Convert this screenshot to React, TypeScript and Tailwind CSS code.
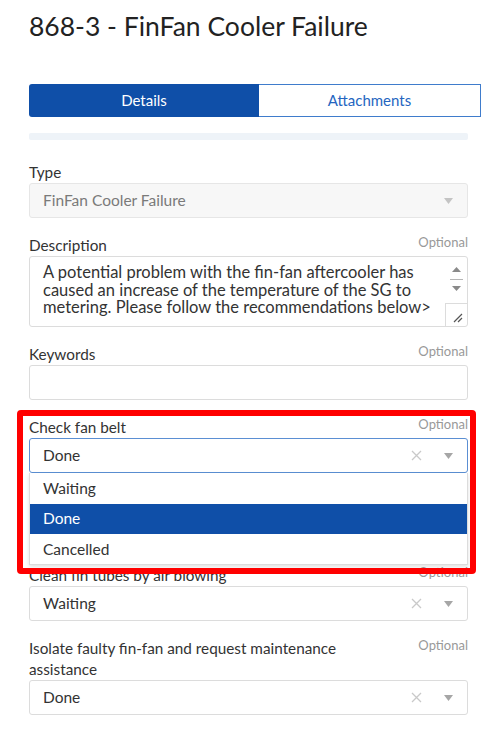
import { ReactNode } from "react";

const Label = ({ text, optional }: { text: ReactNode; optional?: boolean }) => (
  <div className="flex justify-between items-start min-h-[21px]">
    <span className="text-[15.3px] leading-[21px] text-[#333]">{text}</span>
    {optional && (
      <span className="text-[13px] leading-[17px] text-[#999] shrink-0 ml-2 -mt-[1px]">
        Optional
      </span>
    )}
  </div>
);

const Chevron = () => (
  <svg width="9" height="6" viewBox="0 0 9 6" className="shrink-0">
    <path d="M0 0 H9 L4.5 6 Z" fill="#a6a6a6" />
  </svg>
);

const Clear = () => (
  <svg width="11" height="11" viewBox="0 0 11 11" className="shrink-0">
    <path d="M1 1 L10 10 M10 1 L1 10" stroke="#c9c9c9" strokeWidth="1.3" />
  </svg>
);

const Select = ({ value, active }: { value: string; active?: boolean }) => (
  <div
    className={`h-[35px] flex items-center pl-[13px] pr-[14px] rounded-[3px] border bg-white ${
      active ? "border-[#5b8fd3]" : "border-[#dcdcdc]"
    }`}
  >
    <span className="flex-1 text-[15.5px] text-[#333]">{value}</span>
    <Clear />
    <span className="w-[22px]" />
    <Chevron />
  </div>
);

export default function App() {
  return (
    <div className="relative w-[493px] h-[734px] overflow-hidden bg-white font-['Lato',sans-serif]">
      <div className="pl-[29px] pt-[9px]">
        <h1 className="text-[26.5px] leading-[34px] text-[#222]">
          868-3 - FinFan Cooler Failure
        </h1>

        <div className="mt-[41px] flex w-[452px] h-[33px] text-[15px]">
          <div className="w-[230px] flex items-center justify-center bg-[#0f4fa8] text-white rounded-l-[3px]">
            Details
          </div>
          <div className="flex-1 flex items-center justify-center border border-l-0 border-[#3f7ccc] text-[#2565bf]">
            Attachments
          </div>
        </div>

        <div className="mt-[16px] w-[439px] h-[7px] rounded-[2px] bg-[#eef3f8]" />

        <div className="w-[439px] flex flex-col">
          <div className="mt-[22px]">
            <Label text="Type" />
            <div className="h-[35px] flex items-center pl-[13px] pr-[14px] rounded-[3px] border border-[#e6e6e6] bg-[#f7f7f7]">
              <span className="flex-1 text-[15.5px] text-[#7a7a7a]">FinFan Cooler Failure</span>
              <svg width="9" height="6" viewBox="0 0 9 6">
                <path d="M0 0 H9 L4.5 6 Z" fill="#c4c4c4" />
              </svg>
            </div>
          </div>

          <div className="mt-[17px]">
            <Label text="Description" optional />
            <div className="h-[71px] flex rounded-[3px] border border-[#dcdcdc] bg-white overflow-hidden">
              <p className="flex-1 pl-[13px] pt-[7px] text-[16.5px] leading-[17.5px] text-[#333]">
                A potential problem with the fin-fan aftercooler has caused an
                increase of the temperature of the SG to metering. Please follow
                the recommendations below&gt;
              </p>
              <div className="w-[22px] flex flex-col items-center">
                <svg width="22" height="46" viewBox="0 0 22 46">
                  <path d="M7 15 H16 L11.5 10 Z" fill="#8a8a8a" />
                  <path d="M5 22.5 H18" stroke="#b5b5b5" strokeWidth="1" />
                  <path d="M7 29 H16 L11.5 34 Z" fill="#8a8a8a" />
                </svg>
                <div className="flex-1 w-full border-l border-t border-[#dcdcdc] flex items-end justify-end">
                  <svg width="12" height="12" viewBox="0 0 12 12" className="mb-[2px] mr-[3px]">
                    <path d="M2 10 L10 2 M6 10 L10 6" stroke="#555" strokeWidth="1.2" />
                  </svg>
                </div>
              </div>
            </div>
          </div>

          <div className="mt-[17px]">
            <Label text="Keywords" optional />
            <div className="h-[35px] rounded-[3px] border border-[#dcdcdc] bg-white" />
          </div>

          <div className="mt-[17px]">
            <Label text="Check fan belt" optional />
            <Select value="Done" active />
            <div className="h-[92px] border border-t-0 border-[#dcdcdc] bg-white shadow-[0_2px_4px_rgba(0,0,0,0.12)] flex flex-col text-[15.5px] text-[#333]">
              <div className="h-[31px] flex items-center pl-[13px]">Waiting</div>
              <div className="h-[31px] flex items-center pl-[13px] bg-[#0f4fa8] text-white">Done</div>
              <div className="h-[30px] flex items-center pl-[13px]">Cancelled</div>
            </div>
          </div>

          <div>
            <Label text="Clean fin tubes by air blowing" optional />
            <Select value="Waiting" />
          </div>

          <div className="mt-[17px]">
            <Label
              text={
                <>
                  Isolate faulty fin-fan and request maintenance
                  <br />
                  assistance
                </>
              }
              optional
            />
            <Select value="Done" />
          </div>
        </div>
      </div>

      <div className="absolute left-[17px] top-[410px] w-[459px] h-[164px] border-[6px] border-[#ff0000] rounded-[4px] pointer-events-none" />
    </div>
  );
}
